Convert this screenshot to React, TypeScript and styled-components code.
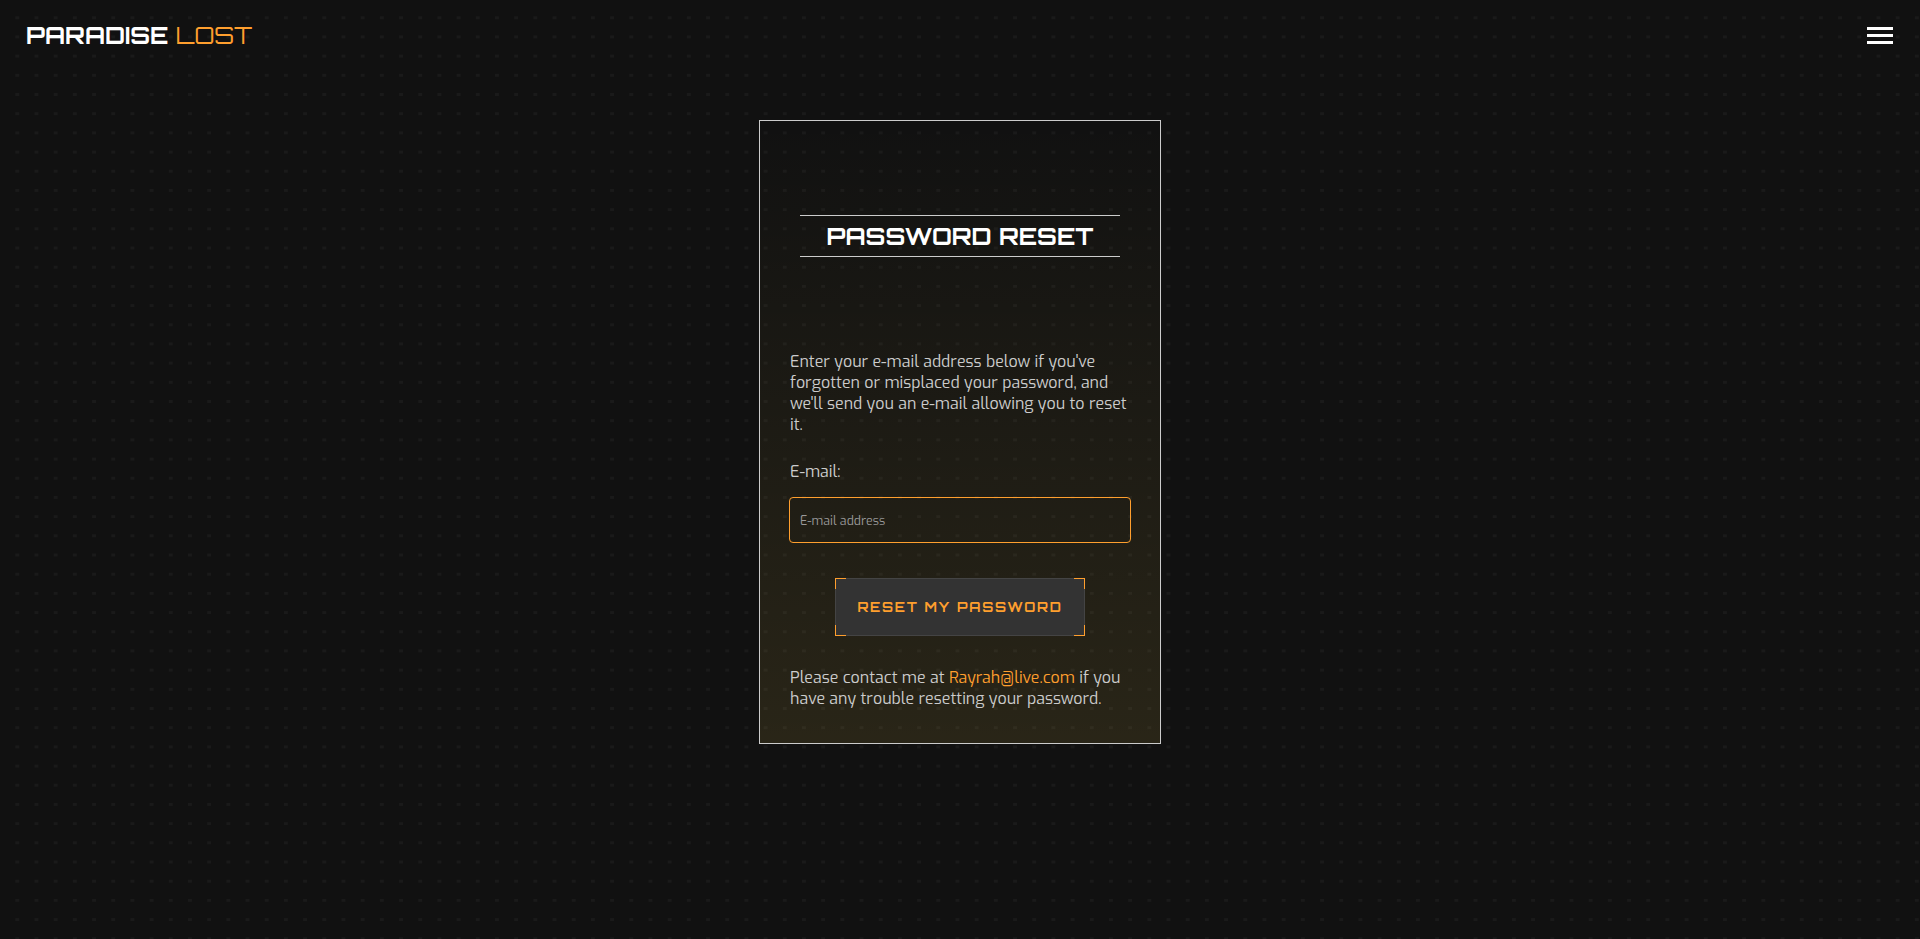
import React from 'react';
import styled, { createGlobalStyle } from 'styled-components';

const orange = '#ff9f2e';
const displayFont = `Orbitron, 'DejaVu Sans', sans-serif`;
const textFont = `Exo, Roboto, sans-serif`;

const GlobalStyle = createGlobalStyle`
  * { box-sizing: border-box; }
  html { background: #111; }
  body {
    margin: 0;
    min-height: 100vh;
    font: 16px/21px ${textFont};
    color: #ccc;
    background:
      linear-gradient(90deg, #111 80%, transparent 80%),
      linear-gradient(#111 84%, transparent 84%),
      #1a1a1a;
    background-size: 19.2px 19.2px;
  }
`;

const Header = styled.header`
  display: flex;
  justify-content: space-between;
  align-items: center;
  height: 70px;
  padding: 0 27px 0 26px;
`;

const Logo = styled.a`
  font: 700 24px/30px ${displayFont};
  color: #fff;
`;

const LogoLight = styled.span`
  font-weight: 400;
  color: ${orange};
`;

const MenuButton = styled.button`
  display: flex;
  flex-direction: column;
  gap: 4px;
  width: 26px;
  margin-top: 1px;
  padding: 0;
  border: 0;
  background: none;
`;

const MenuBar = styled.span`
  height: 3px;
  background: #fff;
`;

const Panel = styled.main`
  display: flex;
  flex-direction: column;
  width: 402px;
  height: 624px;
  margin: 50px auto 0;
  padding: 94px 30px 0;
  border: 1px solid #ccc;
  background: linear-gradient(rgba(255, 215, 80, 0), rgba(255, 215, 80, 0.1));
`;

const Title = styled.h1`
  align-self: center;
  width: 320px;
  height: 42px;
  margin: 0 0 94px;
  border: solid #ccc;
  border-width: 1px 0;
  font: 700 24px/40px ${displayFont};
  text-align: center;
  color: #fff;
`;

const Copy = styled.p`
  margin: 0;
`;

const Label = styled.label`
  margin: 26px 0 15px;
`;

const Field = styled.input`
  width: 342px;
  height: 46px;
  margin: 0 -1px 35px;
  padding: 2px 10px 0;
  border: 1px solid ${orange};
  border-radius: 4px;
  outline: none;
  background: transparent;
  color: #ccc;
  font: 12.4px ${textFont};
  &::placeholder { color: #999; opacity: 1; }
`;

const corner = `linear-gradient(${orange}, ${orange})`;

const Submit = styled.button`
  align-self: center;
  width: 250px;
  height: 58px;
  margin-bottom: 31px;
  padding: 0;
  border: 1px solid transparent;
  background:
    ${corner} 0 0 / 11px 1px, ${corner} 0 0 / 1px 11px,
    ${corner} 100% 0 / 11px 1px, ${corner} 100% 0 / 1px 11px,
    ${corner} 0 100% / 11px 1px, ${corner} 0 100% / 1px 11px,
    ${corner} 100% 100% / 11px 1px, ${corner} 100% 100% / 1px 11px,
    linear-gradient(#333, #333) center / calc(100% - 2px) calc(100% - 2px),
    #444;
  background-repeat: no-repeat;
  background-origin: border-box;
  color: ${orange};
  font: 700 13.333px ${displayFont};
  letter-spacing: 1.75px;
`;

const MailLink = styled.a`
  color: ${orange};
`;

export default function App() {
  return (
    <>
      <GlobalStyle />
      <Header>
        <Logo>
          PARADISE <LogoLight>LOST</LogoLight>
        </Logo>
        <MenuButton aria-label="Menu">
          <MenuBar />
          <MenuBar />
          <MenuBar />
        </MenuButton>
      </Header>
      <Panel>
        <Title>PASSWORD RESET</Title>
        <Copy>
          Enter your e-mail address below if you've forgotten or misplaced your
          password, and we'll send you an e-mail allowing you to reset it.
        </Copy>
        <Label htmlFor="email">E-mail:</Label>
        <Field id="email" type="email" placeholder="E-mail address" />
        <Submit type="button">RESET MY PASSWORD</Submit>
        <Copy>
          Please contact me at <MailLink>Rayrah@live.com</MailLink> if you have
          any trouble resetting your password.
        </Copy>
      </Panel>
    </>
  );
}
